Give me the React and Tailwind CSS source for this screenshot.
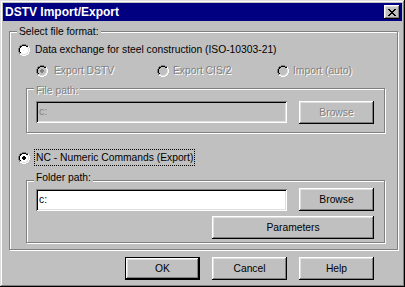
import React from "react";

const RADIO_MAP = [
  "....GGGG....",
  "..GGKKKKGG..",
  ".GKKFFFFKKW.",
  ".GKFFFFFFLW.",
  "GKFFFFFFFFLW",
  "GKFFFFFFFFLW",
  "GKFFFFFFFFLW",
  "GKFFFFFFFFLW",
  ".GKFFFFFFLW.",
  ".GLLFFFFLLW.",
  "..WWLLLLWW..",
  "....WWWW....",
];

const DOT_MAP = [
  "............",
  "............",
  "............",
  "............",
  ".....DD.....",
  "....DDDD....",
  "....DDDD....",
  ".....DD.....",
  "............",
  "............",
  "............",
  "............",
];

const CLOSE_MAP = [
  "KK....KK",
  ".KK..KK.",
  "..KKKK..",
  "...KK...",
  "..KKKK..",
  ".KK..KK.",
  "KK....KK",
];

function Pixels({ maps, colors, w, h }) {
  const rects = [];
  maps.forEach((map, m) =>
    map.forEach((row, y) =>
      row.split("").forEach((c, x) => {
        if (colors[c])
          rects.push(
            <rect key={m + "-" + x + "-" + y} x={x} y={y} width="1" height="1" fill={colors[c]} />
          );
      })
    )
  );
  return (
    <svg width={w} height={h} viewBox={`0 0 ${w} ${h}`} shapeRendering="crispEdges" className="block shrink-0">
      {rects}
    </svg>
  );
}

function Radio({ checked, disabled }) {
  const colors = {
    G: "#808080",
    K: "#000000",
    W: "#ffffff",
    L: "#dfdfdf",
    F: disabled ? "#c0c0c0" : "#ffffff",
    D: disabled ? "#808080" : "#000000",
  };
  return <Pixels maps={checked ? [RADIO_MAP, DOT_MAP] : [RADIO_MAP]} colors={colors} w={12} h={12} />;
}

function Btn({ children, className = "", def, disabled }) {
  return (
    <div
      className={
        "h-[23px] bg-[#c0c0c0] flex items-center justify-center text-[10.3px] leading-[13px] shadow-[inset_-1px_-1px_0_#000,inset_1px_1px_0_#fff,inset_-2px_-2px_0_#808080,inset_2px_2px_0_#dfdfdf] " +
        (def ? "border border-black " : "") +
        (disabled ? "text-[#808080] [text-shadow:1px_1px_0_#fff] " : "text-black ") +
        className
      }
    >
      {children}
    </div>
  );
}

function Input({ value, disabled }) {
  return (
    <div
      className={
        "w-[251px] h-[22px] flex items-center pl-[3px] text-[10.3px] shadow-[inset_1px_1px_0_#808080,inset_-1px_-1px_0_#fff,inset_2px_2px_0_#000,inset_-2px_-2px_0_#dfdfdf] " +
        (disabled ? "bg-[#c0c0c0] text-[#808080]" : "bg-white text-black")
      }
    >
      {value}
    </div>
  );
}

const DIS = "text-[#808080] [text-shadow:1px_1px_0_#fff]";

export default function App() {
  return (
    <div className="w-[405px] h-[287px] bg-[#c0c0c0] p-[3px] flex flex-col font-['Liberation_Sans',Arial,sans-serif] text-[10.3px] shadow-[inset_-1px_-1px_0_#000,inset_1px_1px_0_#dfdfdf,inset_-2px_-2px_0_#808080,inset_2px_2px_0_#fff]">
      {/* Title bar */}
      <div className="h-[18px] bg-[#000080] flex items-center pl-[2px] pr-[2px]">
        <span className="flex-1 text-white font-bold text-[12px] leading-[18px]">DSTV Import/Export</span>
        <div className="w-[16px] h-[14px] bg-[#c0c0c0] flex items-center justify-center shadow-[inset_-1px_-1px_0_#000,inset_1px_1px_0_#fff,inset_-2px_-2px_0_#808080,inset_2px_2px_0_#dfdfdf]">
          <Pixels maps={[CLOSE_MAP]} colors={{ K: "#000" }} w={8} h={7} />
        </div>
      </div>

      {/* Body */}
      <div className="flex-1 flex flex-col pl-[6px] pr-[4px] pt-[4px]">
        <fieldset className="w-[389px] border border-[#808080] shadow-[inset_1px_1px_0_#fff,1px_1px_0_#fff] pb-[6px]">
          <legend className="ml-[7px] px-[2px] leading-[13px] bg-[#c0c0c0]">Select file format:</legend>
          <div className="flex flex-col pl-[8px]">
            {/* Row 1 */}
            <div className="mt-[4px] h-[16px] flex items-center gap-[5px] leading-[16px]">
              <Radio />
              <span>Data exchange for steel construction (ISO-10303-21)</span>
            </div>
            {/* Row 2 */}
            <div className="mt-[5px] h-[16px] pl-[18px] grid grid-cols-[121px_120px_1fr] leading-[16px]">
              <div className="flex items-center gap-[6px]">
                <Radio checked disabled />
                <span className={DIS}>Export DSTV</span>
              </div>
              <div className="flex items-center gap-[4px]">
                <Radio disabled />
                <span className={DIS}>Export CIS/2</span>
              </div>
              <div className="flex items-center gap-[4px]">
                <Radio disabled />
                <span className={DIS}>Import (auto)</span>
              </div>
            </div>
            {/* File path group */}
            <fieldset className="mt-[3px] ml-[8px] w-[359px] border border-[#808080] shadow-[inset_1px_1px_0_#fff,1px_1px_0_#fff]">
              <legend className={"ml-[7px] px-[2px] leading-[13px] bg-[#c0c0c0] " + DIS}>
                <span className="block translate-y-[2px]">File path:</span>
              </legend>
              <div className="flex items-start gap-[12px] pt-[6px] pl-[9px] pr-[10px] pb-[8px]">
                <Input value="c:" disabled />
                <Btn disabled className="w-[75px]">Browse</Btn>
              </div>
            </fieldset>
            {/* NC row */}
            <div className="mt-[16px] h-[17px] flex items-start gap-[4px]">
              <div className="mt-[3px]">
                <Radio checked />
              </div>
              <span className="h-[17px] border border-dotted border-black px-[1px] leading-[15px]">
                NC - Numeric Commands (Export)
              </span>
            </div>
            {/* Folder path group */}
            <fieldset className="mt-[8px] ml-[8px] w-[359px] border border-[#808080] shadow-[inset_1px_1px_0_#fff,1px_1px_0_#fff]">
              <legend className="ml-[7px] px-[2px] leading-[13px] bg-[#c0c0c0]">
                <span className="block -translate-y-[3px]">Folder path:</span>
              </legend>
              <div className="flex flex-col pt-[1px] pl-[9px] pr-[10px] pb-[3px]">
                <div className="flex items-start gap-[12px]">
                  <div className="mt-[1px]">
                    <Input value="c:" />
                  </div>
                  <Btn className="w-[75px]">Browse</Btn>
                </div>
                <div className="mt-[5px] flex justify-end">
                  <Btn className="w-[162px]">Parameters</Btn>
                </div>
              </div>
            </fieldset>
          </div>
        </fieldset>

        {/* Dialog buttons */}
        <div className="mt-[7px] flex justify-end gap-[12px] pr-[24px]">
          <Btn def className="w-[75px]">OK</Btn>
          <Btn className="w-[75px]">Cancel</Btn>
          <Btn className="w-[75px]">Help</Btn>
        </div>
      </div>
    </div>
  );
}
